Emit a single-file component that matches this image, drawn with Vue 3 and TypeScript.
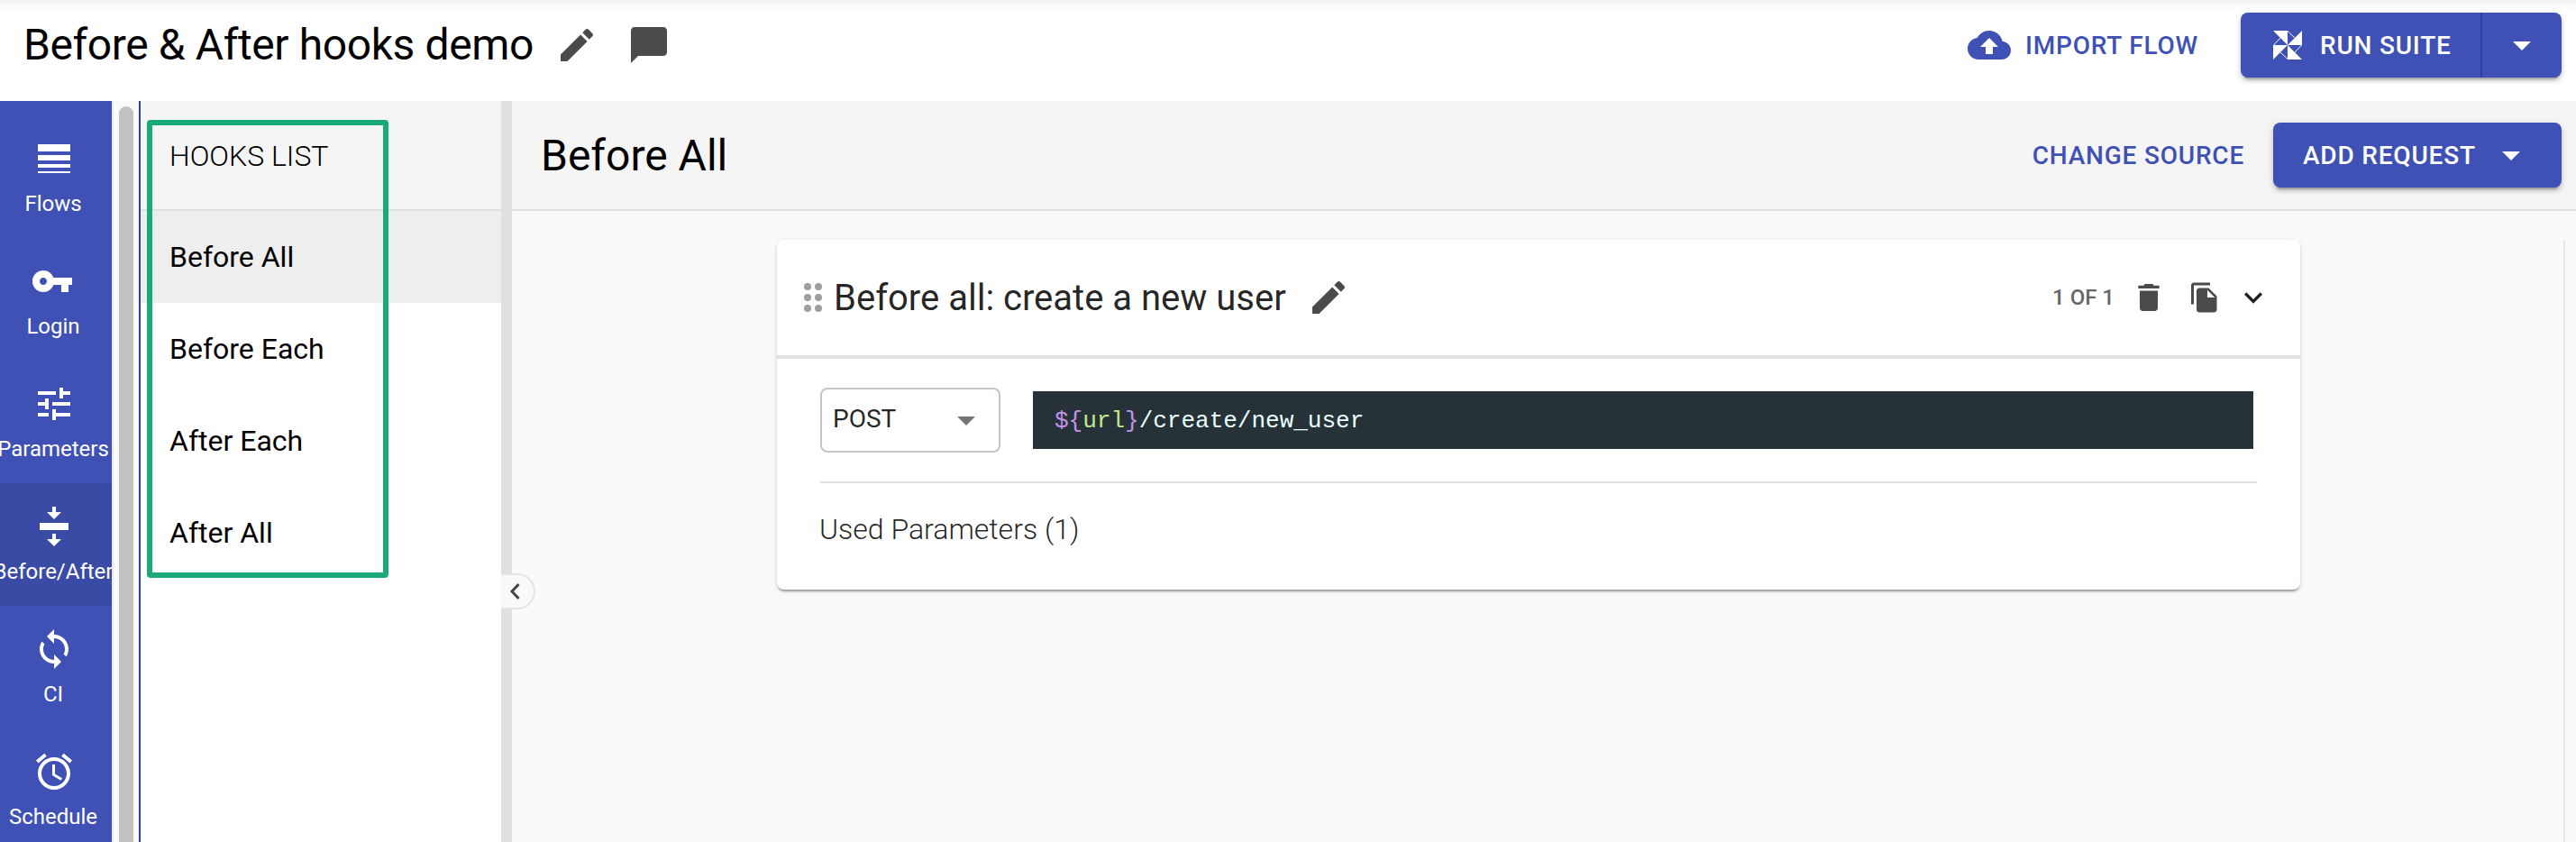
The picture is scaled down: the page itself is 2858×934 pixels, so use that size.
<script setup lang="ts">
interface NavItem { label: string; path: string; box: string; active?: boolean }

const nav: NavItem[] = [
  { label: 'Flows', box: '0 0 24 24', path: 'M3 17h18v-2H3v2zm0 3h18v-1H3v1zm0-7h18v-3H3v3zm0-9v4h18V4H3z' },
  { label: 'Login', box: '1 0 24 24', path: 'M12.65 10C11.83 7.67 9.61 6 7 6c-3.31 0-6 2.69-6 6s2.69 6 6 6c2.61 0 4.83-1.67 5.65-4H17v4h4v-4h2v-4H12.65zM7 14c-1.1 0-2-.9-2-2s.9-2 2-2 2 .9 2 2-.9 2-2 2z' },
  { label: 'Parameters', box: '0 0 24 24', path: 'M3 17v2h6v-2H3zM3 5v2h10V5H3zm10 16v-2h8v-2h-8v-2h-2v6h2zM7 9v2H3v2h4v2h2V9H7zm14 4v-2H11v2h10zm-6-4h2V7h4V5h-4V3h-2v6z' },
  { label: 'Before/After', box: '0 0 24 24', active: true, path: 'M11 1v3H8l4 4 4-4h-3V1zM4 10h16v4H4zM11 16v3H8l4 4 4-4h-3v-3z' },
  { label: 'CI', box: '0 0 24 24', path: 'M12 4V1L8 5l4 4V6c3.31 0 6 2.69 6 6 0 1.01-.25 1.97-.7 2.8l1.46 1.46C19.54 15.03 20 13.57 20 12c0-4.42-3.58-8-8-8zm0 14c-3.31 0-6-2.69-6-6 0-1.01.25-1.97.7-2.8L5.24 7.74C4.46 8.97 4 10.43 4 12c0 4.42 3.58 8 8 8v3l4-4-4-4v3z' },
  { label: 'Schedule', box: '0 0 24 24', path: 'M22 5.72l-4.6-3.86-1.29 1.53 4.6 3.86L22 5.72zM7.88 3.39L6.6 1.86 2 5.71l1.29 1.53 4.59-3.85zM12.5 8H11v6l4.75 2.85.75-1.23-4-2.37V8zM12 4c-4.97 0-9 4.03-9 9s4.02 9 9 9c4.97 0 9-4.03 9-9s-4.03-9-9-9zm0 16c-3.87 0-7-3.13-7-7s3.13-7 7-7 7 3.13 7 7-3.13 7-7 7z' },
]
const hooks = ['Before All', 'Before Each', 'After Each', 'After All']
const pencil = 'M3 17.25V21h3.75L17.81 9.94l-3.75-3.75L3 17.25zM20.71 7.04c.39-.39.39-1.02 0-1.41l-2.34-2.34c-.39-.39-1.02-.39-1.41 0l-1.83 1.83 3.75 3.75 1.83-1.83z'
</script>

<template>
  <div class="app">
    <header class="top">
      <h1 class="suite">Before &amp; After hooks demo</h1>
      <svg class="ic suite-pencil" viewBox="0 0 24 24"><path :d="pencil" /></svg>
      <svg class="ic suite-note" viewBox="0 0 24 24"><path d="M20 2H4c-1.100 0-2 .9-2 2v18l4-4h14c1.100 0 2-.9 2-2V4c0-1.100-.9-2-2-2z" /></svg>
      <button class="flat import">
        <svg viewBox="0 0 24 24"><path d="M19.35 10.04C18.67 6.59 15.64 4 12 4 9.110 4 6.600 5.640 5.350 8.040 2.340 8.360 0 10.910 0 14c0 3.310 2.690 6 6 6h13c2.760 0 5-2.240 5-5 0-2.640-2.050-4.780-4.650-4.960zM14 13v4h-4v-4H7l5-5 5 5h-3z" /></svg>
        <span>IMPORT FLOW</span>
      </button>
      <div class="raised run">
        <button class="run-main">
          <svg viewBox="0 0 32 32"><path d="M0 0H16V16zM32 0V16H16zM32 32H16V16zM0 32V16H16z" /><path class="fold" d="M16 .5L24 8M.5 16L8 8M16 31.500L8 24M31.500 16L24 24" /></svg>
          <span>RUN SUITE</span>
        </button>
        <button class="run-more"><i class="caret"></i></button>
      </div>
    </header>

    <div class="body">
      <nav class="nav">
        <a v-for="n in nav" :key="n.label" class="nav-item" :class="{ active: n.active }">
          <svg :viewBox="n.box"><path :d="n.path" fill-rule="evenodd" /></svg>
          <span>{{ n.label }}</span>
        </a>
      </nav>
      <div class="track"><div class="thumb"></div></div>

      <aside class="hooks">
        <div class="hooks-head">HOOKS LIST</div>
        <div v-for="(h, i) in hooks" :key="h" class="hook" :class="{ selected: i === 0 }">{{ h }}</div>
        <div class="highlight"></div>
      </aside>

      <div class="splitter">
        <button class="collapse"><svg viewBox="0 0 14 22"><path d="M10.500 3L3 11l7.500 8" /></svg></button>
      </div>

      <main class="main">
        <div class="main-head">
          <h2>Before All</h2>
          <button class="flat change">CHANGE SOURCE</button>
          <button class="raised add"><span>ADD REQUEST</span><i class="caret"></i></button>
        </div>
        <div class="canvas">
          <section class="card">
            <div class="card-head">
              <div class="grip"><i v-for="d in 6" :key="d"></i></div>
              <h3>Before all: create a new user</h3>
              <svg class="ic card-pencil" viewBox="0 0 24 24"><path :d="pencil" /></svg>
              <span class="count">1 OF 1</span>
              <svg class="ic trash" viewBox="0 0 24 24"><path d="M6 19c0 1.100.9 2 2 2h8c1.100 0 2-.9 2-2V7.500H6zM19 4h-3.500l-1-1h-5l-1 1H5v2h14V4z" /></svg>
              <svg class="ic copy" viewBox="0 0 24 24"><path d="M16 1H4c-1.100 0-2 .9-2 2v14h2V3h12V1zm-1 4l6 6v10c0 1.100-.9 2-2 2H7.990C6.890 23 6 22.100 6 21l.01-14c0-1.100.89-2 1.990-2h7zm-1 7h5.500L14 6.500V12z" /></svg>
              <svg class="chev" viewBox="0 0 24 24"><path d="M7.410 8.590L12 13.170l4.590-4.580L18 10l-6 6-6-6 1.410-1.410z" /></svg>
            </div>
            <div class="card-body">
              <div class="req">
                <div class="method"><span>POST</span><i class="caret grey"></i></div>
                <div class="url"><b>${</b><em>url</em><b>}</b>/create/new_user</div>
              </div>
              <div class="used">Used Parameters (1)</div>
            </div>
          </section>
        </div>
      </main>
    </div>
  </div>
</template>

<style>
body { margin: 0; overflow: hidden; }
</style>

<style scoped>
.app { width: 2858px; height: 934px; overflow: hidden; display: flex; flex-direction: column; font-family: Roboto, "Liberation Sans", sans-serif; background: #fafafa; color: #000; }
.app * { box-sizing: border-box; }
h1, h2, h3 { margin: 0; font-weight: 400; white-space: nowrap; }
button { border: 0; padding: 0; background: none; font: inherit; color: inherit; letter-spacing: inherit; display: flex; align-items: center; }
svg { display: block; flex: none; fill: currentColor; }
i { display: block; flex: none; }
.ic { color: #4b4b4b; }

.top { height: 112px; flex: none; display: flex; align-items: center; padding: 0 16px 12px 26px; background: linear-gradient(#f3f3f3, #fff 12px); }
.suite { font-size: 48px; line-height: 56px; width: 564px; letter-spacing: -0.4px; }
.suite-pencil { width: 48px; height: 48px; margin-left: 26px; }
.suite-note { width: 48px; height: 48px; margin-left: 32px; }
.flat { color: #3f51b5; font-size: 28px; font-weight: 500; letter-spacing: 0.8px; white-space: nowrap; }
.import { margin-left: auto; margin-right: 47px; }
.import svg { width: 48px; height: 48px; margin-right: 16px; }
.raised { background: #3f51b5; color: #fff; border-radius: 8px; height: 72px; font-size: 28px; font-weight: 500; letter-spacing: 0.8px; white-space: nowrap; box-shadow: 0 6px 2px -4px rgba(0,0,0,.2), 0 4px 4px rgba(0,0,0,.14), 0 2px 10px rgba(0,0,0,.12); }
.run { width: 356px; display: flex; }
.run-main { width: 268px; border-right: 2px solid #303f9f; padding-left: 36px; }
.run-main svg { width: 32px; height: 32px; margin-right: 20px; }
.fold { fill: none; stroke: currentColor; stroke-width: 1; }
.run-more { flex: 1; justify-content: center; }
.caret { width: 0; height: 0; border: 10px solid transparent; border-top-color: currentColor; border-bottom: 0; margin-top: 2px; }

.body { flex: 1; min-height: 0; display: flex; }
.nav { width: 124px; flex: none; background: #3f51b5; padding-top: 16px; overflow: hidden; color: #fff; }
.nav-item { height: 136px; width: 120px; display: flex; flex-direction: column; align-items: center; padding-top: 24px; font-size: 24px; line-height: 28px; }
.nav-item svg { width: 48px; height: 48px; margin-bottom: 12px; }
.nav-item.active { width: 124px; padding-right: 4px; background: #3a4ba6; }
.nav-item span { white-space: nowrap; margin-right: 2px; }
.track { width: 32px; flex: none; background: #fafafa; border-left: 2px solid #e8e8e8; border-right: 2px solid #303f9f; padding: 6px 6px 0; overflow: hidden; }
.thumb { width: 16px; height: 1000px; border-radius: 8px; background: #c1c1c1; }

.hooks { width: 400px; flex: none; background: #fff; position: relative; }
.hooks-head { height: 122px; padding: 0 32px; line-height: 122px; font-size: 32px; font-weight: 300; background: #f5f5f5; border-bottom: 2px solid #e0e0e0; }
.hook { height: 102px; line-height: 102px; padding-left: 32px; font-size: 32px; }
.hook.selected { background: #eee; }
.highlight { position: absolute; left: 7px; top: 21px; width: 268px; height: 508px; border: 6px solid #18aa78; border-radius: 4px; }

.splitter { width: 12px; flex: none; background: #e0e0e0; position: relative; }
.collapse { position: absolute; left: 0; top: 524px; width: 38px; height: 40px; background: #fafafa; border: 2px solid #e4e4e4; border-left: 0; border-radius: 0 20px 20px 0; }
.collapse svg { width: 14px; height: 22px; margin-left: 9px; fill: none; stroke: #444; stroke-width: 3; }

.main { flex: 1; min-width: 0; display: flex; flex-direction: column; }
.main-head { height: 122px; flex: none; display: flex; align-items: center; padding: 0 16px 0 32px; background: #f5f5f5; border-bottom: 2px solid #e0e0e0; }
.main-head h2 { font-size: 48px; }
.change { margin-left: auto; margin-right: 32px; }
.add { width: 320px; padding-left: 33px; }
.add .caret { margin-left: 29px; }
.canvas { flex: 1; margin: 32px 12px 0 0; border-right: 2px solid #e6e6e6; padding-left: 294px; }
.card { width: 1690px; height: 388px; border-radius: 8px; background: #fff; box-shadow: 0 4px 2px -2px rgba(0,0,0,.2), 0 2px 2px rgba(0,0,0,.14), 0 2px 6px rgba(0,0,0,.12); color: rgba(0,0,0,.87); }
.card-head { height: 132px; border-bottom: 4px solid #e0e0e0; display: flex; align-items: center; padding: 0 32px 0 30px; }
.grip { display: grid; grid-template-columns: 8px 8px; gap: 4px; margin-right: 13px; }
.grip i { width: 8px; height: 8px; border-radius: 50%; background: #9e9e9e; }
.card-head h3 { font-size: 40px; width: 502px; }
.card-pencil { width: 48px; height: 48px; margin-left: 23px; }
.count { margin-left: auto; font-size: 24px; font-weight: 500; color: #666; }
.trash { width: 40px; height: 40px; margin-left: 18px; }
.copy { width: 36px; height: 36px; margin-left: 24px; }
.chev { width: 40px; height: 40px; margin-left: 16px; }
.card-body { padding: 32px 48px; }
.req { height: 106px; display: flex; align-items: flex-start; border-bottom: 2px solid #e0e0e0; }
.method { width: 200px; height: 72px; border: 2px solid #c4c4c4; border-radius: 8px; display: flex; align-items: center; justify-content: space-between; padding: 0 26px 3px 12px; font-size: 28px; }
.grey { color: #757575; margin-top: 5px; }
.url { width: 1354px; height: 64px; margin: 4px 0 0 36px; background: #263238; color: #e9fffd; font: 26px/66px "Liberation Mono", monospace; padding-left: 24px; }
.url b { font-weight: 400; color: #c792ea; }
.url em { font-style: normal; color: #c3e88d; }
.used { margin: 32px 0 0 -1px; font-size: 32px; line-height: 38px; font-weight: 300; }
</style>
